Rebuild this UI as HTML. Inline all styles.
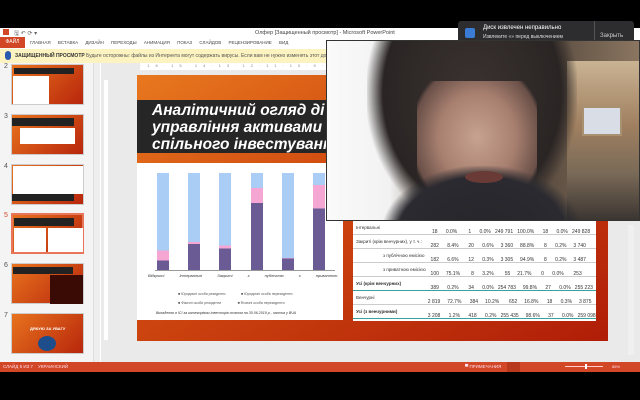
<!DOCTYPE html><html><head><meta charset="utf-8"><style>
*{margin:0;padding:0;box-sizing:border-box}
body{width:640px;height:400px;background:#000;position:relative;overflow:hidden;font-family:"Liberation Sans","DejaVu Sans",sans-serif}
.a{position:absolute}
.t{font-size:5px;color:#444;white-space:nowrap}
.th{position:absolute;left:11px;width:73px;height:41px;background:linear-gradient(135deg,#e8731e,#b8260c);border:1px solid #ccc}
.num{position:absolute;left:4px;font-size:7px;color:#555}
.row{position:absolute;left:353px;width:243px;height:14px;border-bottom:1px solid #ccc;font-size:4.5px;color:#333;line-height:14px;padding-left:3px}
</style></head><body>
<div class="a" style="left:0;top:28px;width:640px;height:344px;background:#fff"></div>
<div class="a t" style="left:255px;top:30px;font-size:5.5px">Олфер [Защищенный просмотр] - Microsoft PowerPoint</div>
<div class="a" style="left:3px;top:29px;width:6px;height:6px;background:#d24726"></div>
<div class="a t" style="left:14px;top:29px;color:#666;font-size:6px">🖫 ↶ ⟳ ▾</div>
<div class="a" style="left:0;top:37px;width:25px;height:11px;background:#d24726;color:#fff;font-size:5px;line-height:11px;text-align:center">ФАЙЛ</div>
<div class="a t" style="left:30px;top:40px;font-size:4.5px;word-spacing:6px">ГЛАВНАЯ ВСТАВКА ДИЗАЙН ПЕРЕХОДЫ АНИМАЦИЯ ПОКАЗ&nbsp;СЛАЙДОВ РЕЦЕНЗИРОВАНИЕ ВИД</div>
<div class="a" style="left:0;top:49px;width:330px;height:14px;background:#fcf3c0"></div>
<div class="a" style="left:5px;top:51px;width:6px;height:9px;background:#2a5ab0;border-radius:3px"></div>
<div class="a t" style="left:15px;top:53px;font-weight:bold;color:#333">ЗАЩИЩЕННЫЙ ПРОСМОТР</div>
<div class="a t" style="left:86px;top:53px;color:#555">Будьте осторожны: файлы из Интернета могут содержать вирусы. Если вам не нужно изменять этот до</div>
<div class="a" style="left:0;top:63px;width:94px;height:299px;background:#f4f4f4"></div>
<div class="a" style="left:93px;top:63px;width:7px;height:299px;background:#eee;border-left:1px solid #ddd"></div>
<div class="num" style="top:63px">2</div><div class="th" style="top:64px"><div class="a" style="left:2px;top:3px;width:60px;height:6px;background:#222"></div><div class="a" style="left:1px;top:11px;width:36px;height:28px;background:#fff"></div></div>
<div class="num" style="top:113px">3</div><div class="th" style="top:114px"><div class="a" style="left:0;top:3px;width:62px;height:8px;background:#222"></div><div class="a" style="left:8px;top:13px;width:55px;height:16px;background:#fff"></div></div>
<div class="num" style="top:163px">4</div><div class="th" style="top:164px"><div class="a" style="left:1px;top:1px;width:70px;height:28px;background:#fff"></div><div class="a" style="left:0;top:29px;width:62px;height:7px;background:#222"></div></div>
<div class="num" style="top:212px;color:#d24726">5</div><div class="th" style="top:213px;border:2px solid #e8765a"><div class="a" style="left:1px;top:3px;width:60px;height:8px;background:#222"></div><div class="a" style="left:1px;top:13px;width:32px;height:24px;background:#fff"></div><div class="a" style="left:35px;top:13px;width:35px;height:24px;background:#fff"></div></div>
<div class="num" style="top:262px">6</div><div class="th" style="top:263px"><div class="a" style="left:1px;top:3px;width:60px;height:7px;background:#222"></div><div class="a" style="left:38px;top:11px;width:33px;height:29px;background:#3a0a05"></div></div>
<div class="num" style="top:312px">7</div><div class="th" style="top:313px"><div class="a" style="left:18px;top:12px;color:#fff;font-size:4px;font-weight:bold">ДЯКУЮ ЗА УВАГУ</div><div class="a" style="left:26px;top:22px;width:18px;height:15px;background:#1d4d8a;border-radius:50%"></div></div>
<div class="a" style="left:101px;top:63px;width:539px;height:299px;background:#eaeaea"></div>
<div class="a" style="left:140px;top:63px;width:500px;height:7px;background:#fff;font-size:4px;color:#888;letter-spacing:6px;white-space:nowrap;overflow:hidden">·16·15·14·13·12·11·10·9·8·7·6·5·4·3·2·1</div>
<div class="a" style="left:104px;top:80px;width:4px;height:260px;background:#fff"></div>
<div class="a" style="left:137px;top:75px;width:471px;height:266px;background:linear-gradient(150deg,#e8781f 0%,#d04a10 40%,#b01d08 100%)"></div>
<div class="a" style="left:137px;top:100px;width:300px;height:53px;background:#262626"></div>
<div class="a" style="left:152px;top:102px;color:#fff;font-style:italic;font-weight:bold;font-size:15.5px;line-height:17px;white-space:nowrap">Аналітичний огляд ді<br>управління активами<br>спільного інвестуванн</div>
<div class="a" style="left:137px;top:163px;width:206px;height:157px;background:#fff"></div>
<div class="a" style="left:155px;top:270px;width:180px;height:1px;background:#999"></div>
<div class="a" style="left:157px;top:173px;width:12px;height:97px;background:linear-gradient(#a9cdf5 0 79.8%,#f5a6d2 79.8% 90.3%,#6b5b95 90.3%)"></div>
<div class="a" style="left:188px;top:173px;width:12px;height:97px;background:linear-gradient(#a9cdf5 0 71%,#f5a6d2 71% 73%,#6b5b95 73%)"></div>
<div class="a" style="left:219px;top:173px;width:12px;height:97px;background:linear-gradient(#a9cdf5 0 74.6%,#f5a6d2 74.6% 77.7%,#6b5b95 77.7%)"></div>
<div class="a" style="left:251px;top:173px;width:12px;height:97px;background:linear-gradient(#a9cdf5 0 15.6%,#f5a6d2 15.6% 31%,#6b5b95 31%)"></div>
<div class="a" style="left:282px;top:173px;width:12px;height:97px;background:linear-gradient(#a9cdf5 0 87.7%,#f5a6d2 87.7% 88%,#6b5b95 88%)"></div>
<div class="a" style="left:313px;top:173px;width:12px;height:97px;background:linear-gradient(#a9cdf5 0 12.6%,#f5a6d2 12.6% 36.6%,#6b5b95 36.6%)"></div>
<div class="a" style="left:148px;top:273px;font-size:4px;font-style:italic;color:#333;word-spacing:14px;white-space:nowrap">Відкриті Інтервальні Закриті з&nbsp;публічною з&nbsp;приватною Венчурні</div>
<div class="a" style="left:178px;top:292px;font-size:3.5px;color:#555;white-space:nowrap">■ Юридичні особи резиденти &nbsp;&nbsp;&nbsp;&nbsp;&nbsp;&nbsp;&nbsp;&nbsp;&nbsp;&nbsp;&nbsp;&nbsp;&nbsp;&nbsp;&nbsp;■ Юридичні особи нерезиденти</div>
<div class="a" style="left:178px;top:301px;font-size:3.5px;color:#555;white-space:nowrap">■ Фізичні особи резиденти &nbsp;&nbsp;&nbsp;&nbsp;&nbsp;&nbsp;&nbsp;&nbsp;&nbsp;&nbsp;&nbsp;&nbsp;&nbsp;&nbsp;&nbsp;&nbsp;■ Фізичні особи нерезиденти</div>
<div class="a" style="left:156px;top:311px;font-size:3.6px;font-style:italic;color:#333;white-space:nowrap">Вкладення в ІСІ за категоріями інвесторів станом на 30.06.2019 р., частка у ВЧА</div>
<div class="a" style="left:353px;top:221px;width:243px;height:100px;background:#fff"></div>
<div class="row" style="top:221px">Інтервальні</div>
<div class="row" style="top:235px">Закриті (крім венчурних), у т. ч.:</div>
<div class="row" style="top:249px;padding-left:30px">з публічною емісією</div>
<div class="row" style="top:263px;padding-left:30px">з приватною емісією</div>
<div class="row" style="top:277px;font-weight:bold;border-bottom:1px solid #3aa0a0">Усі (крім венчурних)</div>
<div class="row" style="top:291px">Венчурні</div>
<div class="row" style="top:305px;font-weight:bold;border-bottom:1px solid #3aa0a0">Усі (з венчурними)</div>
<div class="a" style="left:425px;top:225px;font-size:5px;color:#333;line-height:14px;white-space:pre">     18      0.0%        1      0.0%   249 791   100.0%      18      0.0%   249 828
    282      8.4%       20      0.6%     3 360     88.8%       8      0.2%     3 740
    182      6.6%       12      0.3%     3 305     94.9%       8      0.2%     3 487
    100     75.1%        8      3.2%        55     21.7%       0      0.0%       253
    389      0.2%       34      0.0%   254 783     99.8%      27      0.0%   255 223
  2 819     72.7%      384     10.2%       652     16.8%      18      0.3%     3 875
  3 208      1.2%      418      0.2%   255 435     98.6%      37      0.0%   259 098</div>
<div class="a" style="left:628px;top:225px;width:6px;height:130px;background:#f0f0f0"></div>
<div class="a" style="left:0;top:362px;width:640px;height:10px;background:#d24726"></div>
<div class="a" style="left:3px;top:364px;font-size:4.5px;color:#fde;white-space:nowrap">СЛАЙД 5 ИЗ 7 &nbsp;&nbsp;&nbsp;УКРАИНСКИЙ</div>
<div class="a" style="left:465px;top:364px;font-size:4.5px;color:#fde;white-space:nowrap">▀ ПРИМЕЧАНИЯ</div>
<div class="a" style="left:507px;top:362px;width:13px;height:10px;background:#b8391c"></div>
<div class="a" style="left:565px;top:366px;width:38px;height:1px;background:#fcc"></div>
<div class="a" style="left:585px;top:364px;width:2px;height:5px;background:#fff"></div>
<div class="a" style="left:612px;top:364px;font-size:4px;color:#fde">86%</div>
<div class="a" style="left:458px;top:21px;width:176px;height:22px;background:#2d2d30;border-radius:3px"></div>
<div class="a" style="left:465px;top:28px;width:10px;height:10px;background:#3a7bd5;border-radius:2px"></div>
<div class="a" style="left:483px;top:25px;font-size:6px;color:#fff;white-space:nowrap">Диск извлечен неправильно</div>
<div class="a" style="left:483px;top:34px;font-size:5px;color:#ddd;white-space:nowrap">Извлеките «» перед выключением</div>
<div class="a" style="left:594px;top:21px;width:1px;height:22px;background:#555"></div>
<div class="a" style="left:600px;top:33px;font-size:6px;color:#ccc">Закрыть</div>
<div class="a" style="left:326px;top:40px;width:314px;height:181px;border:1px solid #333;overflow:hidden;background:linear-gradient(90deg,#fafafa 0%,#f2f2f2 20%,#c8c0b8 28%,#6e6a66 45%,#5a4c40 70%,#8a7560 100%)">
 <div class="a" style="left:240px;top:20px;width:80px;height:160px;background:linear-gradient(#c9b393,#a08060 40%,#7a6a58 70%,#3a3430)"></div>
 <div class="a" style="left:255px;top:65px;width:40px;height:30px;background:#d8dde6;border:2px solid #a89070"></div>
 <div class="a" style="left:190px;top:5px;width:10px;height:35px;background:#c8a040"></div>
 <div class="a" style="left:40px;top:-5px;width:210px;height:190px;background:radial-gradient(ellipse at 50% 30%,#3a3230 0%,#2a2524 60%,transparent 72%)"></div>
 <div class="a" style="left:90px;top:40px;width:120px;height:125px;background:radial-gradient(ellipse at 50% 45%,#c7a290 0%,#a88070 45%,#6a5048 75%,transparent 80%)"></div>
 <div class="a" style="left:55px;top:125px;width:200px;height:70px;background:radial-gradient(ellipse at 50% 100%,#25252a 0%,#2a2a30 60%,transparent 72%)"></div>
 <div class="a" style="left:138px;top:130px;width:38px;height:12px;background:#6a3a36;border-radius:50%"></div>
</div>
</body></html>
